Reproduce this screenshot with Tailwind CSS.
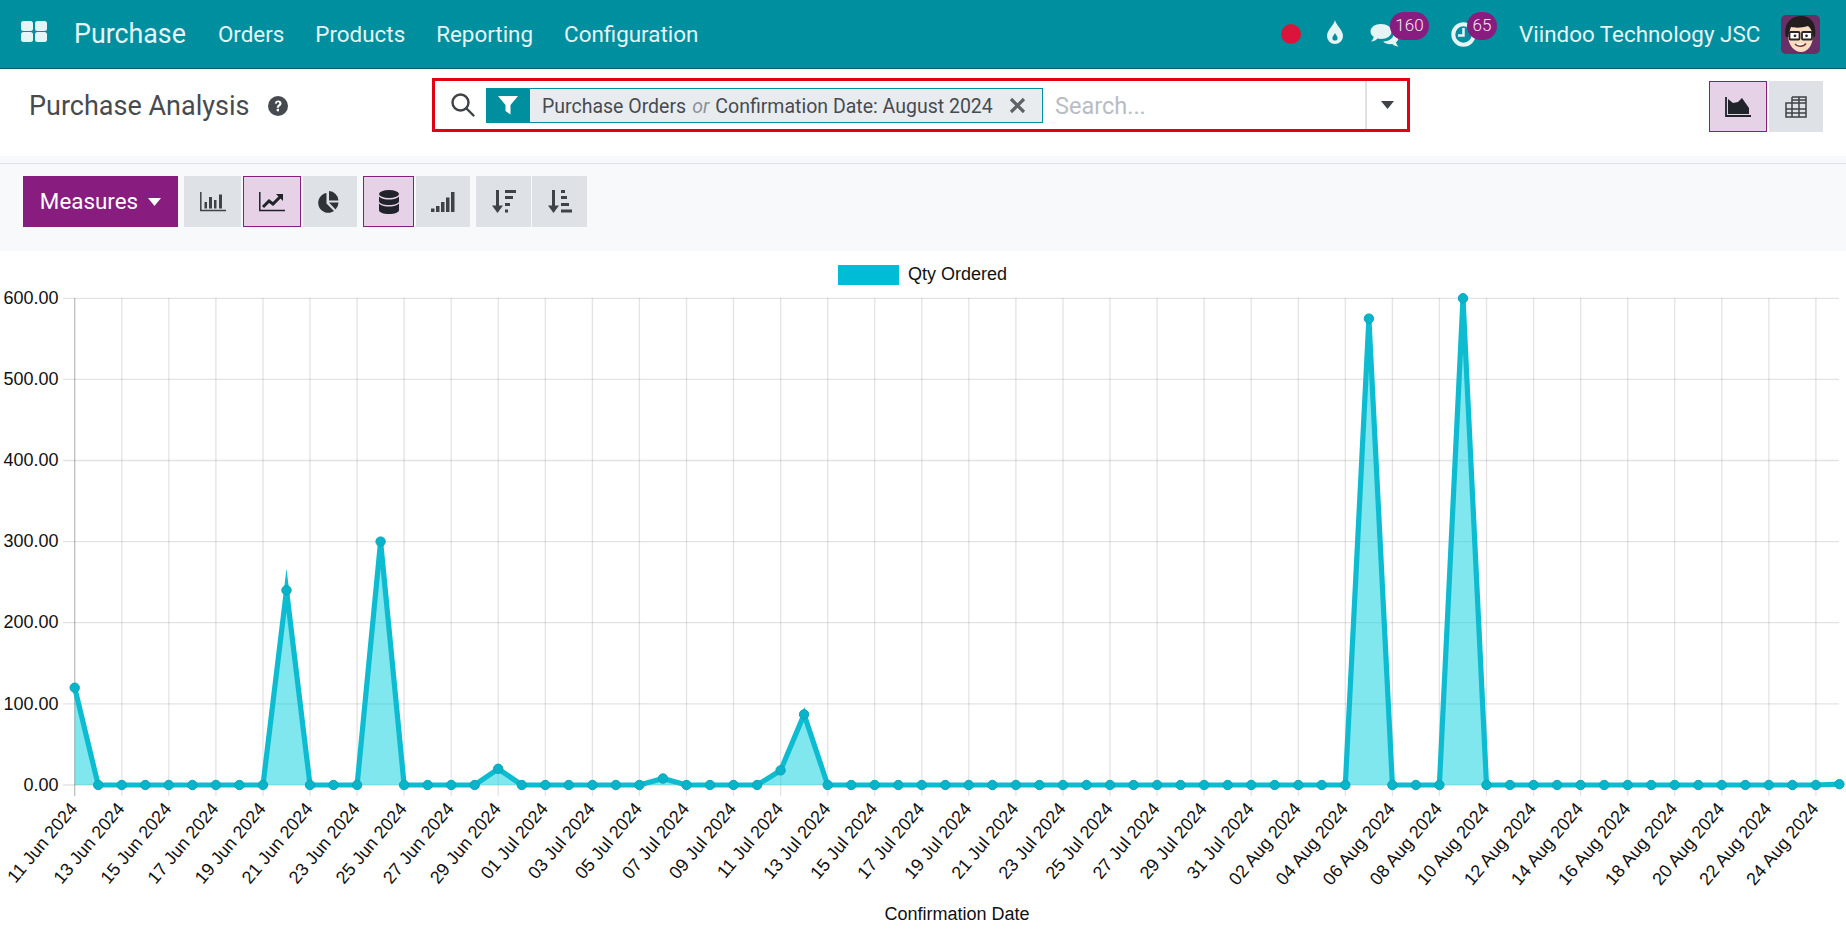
<!DOCTYPE html>
<html lang="en">
<head>
<meta charset="utf-8">
<title>Purchase Analysis</title>
<script src="https://cdn.jsdelivr.net/npm/@tailwindcss/browser@4"></script>
</head>
<body class="m-0 w-[1846px] h-[932px] overflow-hidden flex flex-col bg-white font-['Roboto','Liberation_Sans',sans-serif]">

<nav class="h-[69px] shrink-0 flex items-center bg-[#008f9f] border-b border-[#00606c] text-[#e6f4f5]">
  <svg class="ml-[21px] mt-[-6px]" width="26" height="21" viewBox="0 0 26 21" fill="currentColor"><rect width="12" height="10" rx="2.5"/><rect x="14" width="12" height="10" rx="2.5"/><rect y="11" width="12" height="10" rx="2.5"/><rect x="14" y="11" width="12" height="10" rx="2.5"/></svg>
  <span class="ml-[27px] text-[26.8px]">Purchase</span>
  <span class="ml-[32px] mt-[1px] text-[22.4px]">Orders</span>
  <span class="ml-[31px] mt-[1px] text-[22.4px]">Products</span>
  <span class="ml-[31px] mt-[1px] text-[22.4px]">Reporting</span>
  <span class="ml-[31px] mt-[1px] text-[22.4px]">Configuration</span>
  <div class="ml-auto flex items-center h-full relative w-[566px] shrink-0">
    <span class="absolute left-[1px] top-[24px] w-[20px] h-[20px] rounded-full bg-[#dc143c]"></span>
    <svg class="absolute left-[46px] top-[20px]" width="18" height="24" viewBox="0 0 18 24"><path fill="currentColor" d="M9 0C10 5 17 10 17 16A8 8 0 0 1 1 16C1 10 8 5 9 0Z"/><path fill="#008f9f" d="M9 13c.6 2 2.6 3 2.6 5a2.6 2.6 0 0 1-5.2 0c0-2 2-3 2.6-5Z"/></svg>
    <svg class="absolute left-[90px] top-[23px]" width="30" height="24" viewBox="0 0 30 24" fill="currentColor"><path d="M11 1c6 0 10.500 3 10.500 7.500S17 16 11 16c-1.500 0-2.500-.2-3.500-.4C6 17.500 3.500 18.500 1 18.500c1.300-1.300 2.500-3 2.700-4.700C1.700 12.500.5 10.700.5 8.500.5 4 5 1 11 1Z"/><path d="M23.500 9.500C27 11 28.500 13 28.500 15c0 1.700-1 3.200-2.500 4.300.2 1.500 1.200 3 2.500 4.200-2.500 0-4.800-1-6.200-2.500-3.500.5-7-.3-9.300-2.500 6 .2 11.500-3.500 10.500-9Z"/></svg>
    <span class="absolute left-[110px] top-[12px] w-[39px] h-[28px] rounded-full bg-[#881c7f] text-[17px] font-light text-[#f4e8f3] flex items-center justify-center">160</span>
    <svg class="absolute left-[171px] top-[22px]" width="25" height="25" viewBox="0 0 25 25" fill="none" stroke="currentColor"><circle cx="12.500" cy="12.500" r="10.200" stroke-width="4"/><path d="M12.500 6v7.500H7" stroke-width="2.500"/></svg>
    <span class="absolute left-[187px] top-[12px] w-[30px] h-[28px] rounded-full bg-[#881c7f] text-[17px] font-light text-[#f4e8f3] flex items-center justify-center">65</span>
    <span class="absolute left-[239px] top-[18px] text-[22.4px] whitespace-nowrap">Viindoo Technology JSC</span>
    <svg class="absolute left-[501px] top-[15px] rounded-[5px]" width="39" height="39" viewBox="0 0 39 39">
      <rect width="39" height="39" fill="#6a2f66"/>
      <path d="M7 20C7 10 13 6 20 6s12 5 12 14c0 11-6 17-12 17S7 31 7 20Z" fill="#f8dcc0"/>
      <path d="M5 22C2 10 9 1 20 1c9 0 16 6 14 21l-2.500-1c0-5-2-8-4.500-10-6 2-13 2-17 1-1 3-2.500 6-2.500 10Z" fill="#241d20"/>
      <g fill="#fff" stroke="#2b2326" stroke-width="1.800"><rect x="8.500" y="17" width="10" height="7.500" rx="1"/><rect x="21" y="17" width="10" height="7.500" rx="1"/></g>
      <circle cx="14" cy="20.800" r="1.400" fill="#2b2326"/><circle cx="25.500" cy="20.800" r="1.400" fill="#2b2326"/>
      <path d="M14 29c2.500 3 8.500 3 11-.5" stroke="#7b3a30" stroke-width="1.500" fill="#fff"/>
    </svg>
  </div>
</nav>

<header class="h-[87px] shrink-0 flex items-start pt-[9px] bg-white">
  <div class="w-[432px] h-[54px] shrink-0 pl-[29px] pt-[2px] flex items-center">
    <span class="text-[27px] text-[#474b50] whitespace-nowrap">Purchase Analysis</span>
    <svg class="ml-[19px]" width="20" height="20" viewBox="0 0 20 20"><circle cx="10" cy="10" r="10" fill="#454a50"/><path d="M6.800 7.500C7 5.500 8.500 4.500 10.200 4.500c2 0 3.300 1.200 3.300 2.900 0 2.500-2.600 2.500-2.600 4.300H8.800c0-2.900 2.500-3 2.500-4.200 0-.7-.5-1.200-1.200-1.200-.8 0-1.200.5-1.400 1.400Z" fill="#fff"/><rect x="8.700" y="12.800" width="2.300" height="2.500" fill="#fff"/></svg>
  </div>
  <div class="w-[978px] h-[54px] shrink-0 border-[3px] border-[#e3000f] flex items-center">
    <svg class="ml-[15px] shrink-0" width="26" height="26" viewBox="0 0 26 26" fill="none" stroke="#3f4246" stroke-width="2.400"><circle cx="10.500" cy="10.500" r="8"/><path d="M16.500 16.500l7 7" stroke-linecap="round"/></svg>
    <div class="ml-[10px] w-[44px] h-[35px] bg-[#008f9f] shrink-0 flex items-center justify-center">
      <svg width="20" height="20" viewBox="0 0 20 20" fill="#fff"><path d="M0 1h20l-7.500 9v9.500L7.500 16v-6Z"/></svg>
    </div>
    <div class="w-[513px] h-[35px] shrink-0 bg-[#e9ecef] border border-l-0 border-[#008f9f] flex items-center pl-[12px] text-[19.500px] text-[#474b50] whitespace-nowrap">
      <span class="pt-[3px]">Purchase Orders</span><span class="mx-[6px] pt-[3px] text-[#8d9196] italic">or</span><span class="pt-[3px]">Confirmation Date: August 2024</span>
      <svg class="ml-[16px]" width="17" height="17" viewBox="0 0 17 17" stroke="#5f6368" stroke-width="3.200"><path d="M2 2l13 13M15 2L2 15"/></svg>
    </div>
    <span class="ml-[12px] pt-[3px] flex-1 text-[23.500px] text-[#b8bcc4]">Search...</span>
    <div class="w-[42px] h-full border-l-2 border-[#dee2e6] flex items-center justify-center shrink-0">
      <svg width="13" height="8" viewBox="0 0 13 8" fill="#3f4246"><path d="M0 0h13L6.500 8Z"/></svg>
    </div>
  </div>
  <div class="ml-[299px] mt-[3px] flex gap-[2px]">
    <div class="w-[58px] h-[51px] bg-[#e6d2e6] border border-[#881c7f] flex items-center justify-center">
      <svg width="26" height="20" viewBox="0 0 26 20"><path d="M1 0v19h25" fill="none" stroke="#20232a" stroke-width="1.800"/><path d="M3 17V2l5 4 5 -1 4-4 7 10v6Z" fill="#20232a"/></svg>
    </div>
    <div class="w-[54px] h-[51px] bg-[#dee2e6] flex items-center justify-center">
      <svg width="22" height="22" viewBox="0 0 22 22" fill="none" stroke="#3f4246" stroke-width="1.500"><path d="M7 1h14v20H1V7h20M7 1v20M14 1v20M1 13h20M1 17h20M7 4h14"/></svg>
    </div>
  </div>
</header>

<div class="h-[8px] shrink-0 bg-[#f8f9fa] border-b border-[#dee2e6]"></div>

<div class="h-[87px] shrink-0 bg-[#f8f9fa] flex items-start pt-[12px] pl-[23px]">
  <div class="w-[155px] h-[51px] bg-[#881c7f] text-white text-[22.4px] flex items-center justify-center gap-[10px]">
    <span>Measures</span>
    <svg width="13" height="8" viewBox="0 0 13 8" fill="#fff"><path d="M0 0h13L6.500 8Z"/></svg>
  </div>
  <div class="ml-[6px] flex gap-[2px]">
    <div class="w-[57px] h-[51px] bg-[#dee2e6] flex items-center justify-center">
      <svg width="26" height="20" viewBox="0 0 26 20" fill="#3f4246"><path d="M.8 0v18.500H26" fill="none" stroke="#3f4246" stroke-width="1.500"/><rect x="4.500" y="10" width="2.500" height="6.500"/><rect x="9" y="5" width="3" height="11.500"/><rect x="14" y="8" width="2.500" height="8.500"/><rect x="19" y="2.500" width="3" height="14"/></svg>
    </div>
    <div class="w-[58px] h-[51px] bg-[#e6d2e6] border border-[#881c7f] flex items-center justify-center">
      <svg width="26" height="20" viewBox="0 0 26 20"><path d="M.8 0v18.500H26" fill="none" stroke="#20232a" stroke-width="1.500"/><path d="M4 15l6-6 4 3 7-7" fill="none" stroke="#20232a" stroke-width="3"/><path d="M17 2h7v7Z" fill="#20232a"/></svg>
    </div>
    <div class="w-[54px] h-[51px] bg-[#dee2e6] flex items-center justify-center pr-[4px]">
      <svg width="22" height="22" viewBox="0 0 22 22" fill="#2f3338"><path d="M9.500 2v10.500L17 20A10 10 0 1 1 9.500 2Z"/><path d="M12 0a10 10 0 0 1 9.500 9.500H12Z"/><path d="M21.500 11.500a10 10 0 0 1-3 7l-6.500-7Z"/></svg>
    </div>
  </div>
  <div class="ml-[6px] flex gap-[2px]">
    <div class="w-[51px] h-[51px] bg-[#e6d2e6] border border-[#881c7f] flex items-center justify-center">
      <svg width="20" height="24" viewBox="0 0 20 24" fill="#20232a"><ellipse cx="10" cy="4" rx="10" ry="4"/><path d="M0 6.500C2 9 7 9.500 10 9.500s8-.5 10-3V11c0 2.500-4.500 4-10 4S0 13.500 0 11Z"/><path d="M0 13.500c2 2.500 7 3 10 3s8-.5 10-3V20c0 2.500-4.500 4-10 4S0 22.500 0 20Z"/></svg>
    </div>
    <div class="w-[54px] h-[51px] bg-[#dee2e6] flex items-center justify-center">
      <svg width="24" height="20" viewBox="0 0 24 20" fill="#3f4246"><rect y="16.500" width="3.500" height="3.500"/><rect x="5" y="14" width="3.500" height="6"/><rect x="10" y="10" width="3.500" height="10"/><rect x="15" y="5.500" width="3.500" height="14.500"/><rect x="20" y="0" width="3.500" height="20"/></svg>
    </div>
  </div>
  <div class="ml-[6px] flex gap-[1px]">
    <div class="w-[55px] h-[51px] bg-[#dee2e6] flex items-center justify-center">
      <svg width="24" height="23" viewBox="0 0 24 23" fill="#3f4246"><rect x="4" y="0" width="3" height="17"/><path d="M0 15.500h11L5.500 23Z"/><rect x="13" y="0" width="11" height="3"/><rect x="13" y="6" width="8" height="3"/><rect x="13" y="13" width="5" height="3"/><rect x="13" y="19.500" width="3" height="3"/></svg>
    </div>
    <div class="w-[55px] h-[51px] bg-[#dee2e6] flex items-center justify-center">
      <svg width="24" height="23" viewBox="0 0 24 23" fill="#3f4246"><rect x="4" y="0" width="3" height="17"/><path d="M0 15.500h11L5.500 23Z"/><rect x="13" y="0" width="4" height="3"/><rect x="13" y="6" width="6" height="3"/><rect x="13" y="13" width="8" height="3"/><rect x="13" y="19.500" width="11" height="3"/></svg>
    </div>
  </div>
</div>

<main class="flex-1 bg-white min-h-0">
<svg class="block" width="1846" height="681" viewBox="0 251 1846 681" font-family="Liberation Sans, Arial, sans-serif" font-size="18" fill="#111">
  <defs>
    <marker id="pt" markerUnits="userSpaceOnUse" markerWidth="12" markerHeight="12" refX="6" refY="6" viewBox="0 0 12 12"><circle cx="6" cy="6" r="4.700" fill="#08b4ca" stroke="#12a3b7" stroke-width="1"/></marker>
  </defs>
  <rect x="838" y="265" width="61" height="20" fill="#00bcd4"/>
  <text x="908" y="280">Qty Ordered</text>

  <path fill="none" stroke="#000" stroke-opacity=".11" stroke-width="1.300" d="M63 298.300H1839M63 379.400H1839M63 460.500H1839M63 541.600H1839M63 622.700H1839M63 703.800H1839M63 785H1839"/>
  <path fill="none" stroke="#000" stroke-opacity=".25" stroke-width="1.300" d="M74.700 298V796"/>
  <path fill="none" stroke="#000" stroke-opacity=".11" stroke-width="1.300" d="M121.800 298V796M168.800 298V796M215.900 298V796M263 298V796M310 298V796M357.100 298V796M404.100 298V796M451.200 298V796M498.200 298V796M545.300 298V796M592.400 298V796M639.400 298V796M686.500 298V796M733.500 298V796M780.600 298V796M827.700 298V796M874.700 298V796M921.800 298V796M968.800 298V796M1015.900 298V796M1063 298V796M1110 298V796M1157.100 298V796M1204.100 298V796M1251.200 298V796M1298.300 298V796M1345.300 298V796M1392.400 298V796M1439.400 298V796M1486.500 298V796M1533.600 298V796M1580.600 298V796M1627.700 298V796M1674.700 298V796M1721.800 298V796M1768.900 298V796M1815.900 298V796"/>

  <g text-anchor="end" dominant-baseline="middle">
    <text x="58.500" y="299.300">600.00</text><text x="58.500" y="380.400">500.00</text><text x="58.500" y="461.500">400.00</text><text x="58.500" y="542.600">300.00</text><text x="58.500" y="623.700">200.00</text><text x="58.500" y="704.800">100.00</text><text x="58.500" y="786">0.00</text>
  </g>

  <path fill="rgba(0,207,220,.5)" d="M74.700 785V687.700L98.200 785ZM263 785L286.500 590.300L310 785ZM357.100 785L380.600 541.600L404.100 785ZM474.700 785L498.200 768.800L521.800 785ZM639.400 785L663 778.500L686.500 785ZM757.100 785L780.600 770.400L804.100 714.400L827.700 785ZM1345.300 785L1368.900 318.600L1392.400 785ZM1439.400 785L1463 298.300L1486.500 785ZM1815.900 785L1839.400 784.200V785Z"/>
  <polyline fill="none" stroke="#0dbcd0" stroke-width="5.200" stroke-miterlimit="10" marker-start="url(#pt)" marker-mid="url(#pt)" marker-end="url(#pt)" points="74.700,687.700 98.200,785 121.800,785 145.300,785 168.800,785 192.400,785 215.900,785 239.400,785 263,785 286.500,590.300 310,785 333.500,785 357.100,785 380.600,541.600 404.100,785 427.700,785 451.200,785 474.700,785 498.200,768.800 521.800,785 545.300,785 568.800,785 592.400,785 615.900,785 639.400,785 663,778.500 686.500,785 710,785 733.500,785 757.100,785 780.600,770.400 804.100,714.400 827.700,785 851.200,785 874.700,785 898.300,785 921.800,785 945.300,785 968.800,785 992.400,785 1015.900,785 1039.400,785 1063,785 1086.500,785 1110,785 1133.600,785 1157.100,785 1180.600,785 1204.100,785 1227.700,785 1251.200,785 1274.700,785 1298.300,785 1321.800,785 1345.300,785 1368.900,318.600 1392.400,785 1415.900,785 1439.400,785 1463,298.300 1486.500,785 1510,785 1533.600,785 1557.100,785 1580.600,785 1604.200,785 1627.700,785 1651.200,785 1674.700,785 1698.300,785 1721.800,785 1745.300,785 1768.900,785 1792.400,785 1815.900,785 1839.400,784.200"/>

  <g text-anchor="end" dominant-baseline="middle">
    <text transform="translate(74.700 806) rotate(-50)">11 Jun 2024</text>
    <text transform="translate(121.800 806) rotate(-50)">13 Jun 2024</text>
    <text transform="translate(168.800 806) rotate(-50)">15 Jun 2024</text>
    <text transform="translate(215.900 806) rotate(-50)">17 Jun 2024</text>
    <text transform="translate(263 806) rotate(-50)">19 Jun 2024</text>
    <text transform="translate(310 806) rotate(-50)">21 Jun 2024</text>
    <text transform="translate(357.100 806) rotate(-50)">23 Jun 2024</text>
    <text transform="translate(404.100 806) rotate(-50)">25 Jun 2024</text>
    <text transform="translate(451.200 806) rotate(-50)">27 Jun 2024</text>
    <text transform="translate(498.200 806) rotate(-50)">29 Jun 2024</text>
    <text transform="translate(545.300 806) rotate(-50)">01 Jul 2024</text>
    <text transform="translate(592.400 806) rotate(-50)">03 Jul 2024</text>
    <text transform="translate(639.400 806) rotate(-50)">05 Jul 2024</text>
    <text transform="translate(686.500 806) rotate(-50)">07 Jul 2024</text>
    <text transform="translate(733.500 806) rotate(-50)">09 Jul 2024</text>
    <text transform="translate(780.600 806) rotate(-50)">11 Jul 2024</text>
    <text transform="translate(827.700 806) rotate(-50)">13 Jul 2024</text>
    <text transform="translate(874.700 806) rotate(-50)">15 Jul 2024</text>
    <text transform="translate(921.800 806) rotate(-50)">17 Jul 2024</text>
    <text transform="translate(968.800 806) rotate(-50)">19 Jul 2024</text>
    <text transform="translate(1015.900 806) rotate(-50)">21 Jul 2024</text>
    <text transform="translate(1063 806) rotate(-50)">23 Jul 2024</text>
    <text transform="translate(1110 806) rotate(-50)">25 Jul 2024</text>
    <text transform="translate(1157.100 806) rotate(-50)">27 Jul 2024</text>
    <text transform="translate(1204.100 806) rotate(-50)">29 Jul 2024</text>
    <text transform="translate(1251.200 806) rotate(-50)">31 Jul 2024</text>
    <text transform="translate(1298.300 806) rotate(-50)">02 Aug 2024</text>
    <text transform="translate(1345.300 806) rotate(-50)">04 Aug 2024</text>
    <text transform="translate(1392.400 806) rotate(-50)">06 Aug 2024</text>
    <text transform="translate(1439.400 806) rotate(-50)">08 Aug 2024</text>
    <text transform="translate(1486.500 806) rotate(-50)">10 Aug 2024</text>
    <text transform="translate(1533.600 806) rotate(-50)">12 Aug 2024</text>
    <text transform="translate(1580.600 806) rotate(-50)">14 Aug 2024</text>
    <text transform="translate(1627.700 806) rotate(-50)">16 Aug 2024</text>
    <text transform="translate(1674.700 806) rotate(-50)">18 Aug 2024</text>
    <text transform="translate(1721.800 806) rotate(-50)">20 Aug 2024</text>
    <text transform="translate(1768.900 806) rotate(-50)">22 Aug 2024</text>
    <text transform="translate(1815.900 806) rotate(-50)">24 Aug 2024</text>
  </g>
  <text x="957" y="920" text-anchor="middle">Confirmation Date</text>
</svg>
</main>
</body>
</html>
